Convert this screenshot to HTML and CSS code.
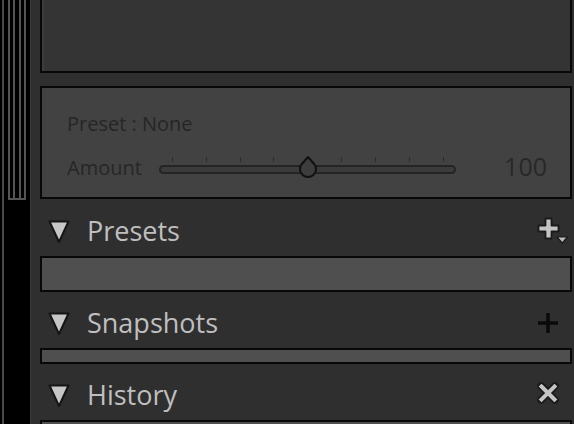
FILE: index.html
```html
<!DOCTYPE html>
<html>
<head>
<meta charset="utf-8">
<link rel="stylesheet" href="styles.css">
</head>
<body>
<div class="app">
  <div class="rail">
    <div class="rail-line"></div>
    <div class="scroller">
      <div class="bar"></div><div class="bar"></div><div class="bar"></div><div class="bar"></div>
    </div>
  </div>
  <div class="panel">
    <div class="box top-box"></div>
    <div class="box preset-box">
      <div class="preset-name">Preset : None</div>
      <div class="amount-row">
        <span class="amount-label">Amount</span>
        <div class="slider">
          <div class="ticks">
            <i></i><i></i><i></i><i></i><i class="hidden"></i><i></i><i></i><i></i><i></i>
          </div>
          <div class="track"></div>
          <svg class="knob" width="24" height="24" viewBox="0 0 24 24"><path d="M12 2 L18.6 9.5 A8 8 0 1 1 5.4 9.5 Z" fill="#3d3d3d" stroke="#111" stroke-width="2" stroke-linejoin="round"/></svg>
        </div>
        <span class="amount-value">100</span>
      </div>
    </div>

    <div class="section-head first">
      <svg class="tri" width="24" height="24" viewBox="0 0 24 24"><path d="M2.5 2.5 L21.5 2.5 L12 23 Z" fill="#c6c6c6" stroke="#151515" stroke-width="2" stroke-linejoin="round"/></svg>
      <span class="section-title">Presets</span>
      <svg class="head-icon" width="34" height="30" viewBox="0 0 34 30"><path d="M7.5 1.5 H13.5 V8.5 H20.5 V14.5 H13.5 V21.5 H7.5 V14.5 H0.5 V8.5 H7.5 Z" transform="translate(1,1)" fill="#c4c4c4" stroke="#1a1a1a" stroke-width="1.8" stroke-linejoin="round"/><path d="M20 21 H30.5 L25.25 27 Z" fill="#bdbdbd" stroke="#1a1a1a" stroke-width="1.2" stroke-linejoin="round"/></svg>
    </div>
    <div class="box list-box presets-list"></div>

    <div class="section-head">
      <svg class="tri" width="24" height="24" viewBox="0 0 24 24"><path d="M2.5 2.5 L21.5 2.5 L12 23 Z" fill="#c6c6c6" stroke="#151515" stroke-width="2" stroke-linejoin="round"/></svg>
      <span class="section-title">Snapshots</span>
      <svg class="head-icon" width="34" height="30" viewBox="0 0 34 30"><path d="M11 5 V25 M1 15 H21" stroke="#0a0a0a" stroke-width="3.5" fill="none"/></svg>
    </div>
    <div class="box list-box snapshots-list"></div>

    <div class="section-head">
      <svg class="tri" width="24" height="24" viewBox="0 0 24 24"><path d="M2.5 2.5 L21.5 2.5 L12 23 Z" fill="#c6c6c6" stroke="#151515" stroke-width="2" stroke-linejoin="round"/></svg>
      <span class="section-title">History</span>
      <svg class="head-icon" width="34" height="30" viewBox="0 0 34 30"><path d="M4 6 L18 20 M18 6 L4 20" stroke="#1a1a1a" stroke-width="7.5" stroke-linecap="round" fill="none"/><path d="M4.5 6.5 L17.5 19.5 M17.5 6.5 L4.5 19.5" stroke="#c4c4c4" stroke-width="4" stroke-linecap="square" fill="none"/></svg>
    </div>
    <div class="box list-box history-list"></div>
  </div>
</div>
</body>
</html>
```

FILE: styles.css
```css
html, body {
  margin: 0;
  padding: 0;
  background: #2f2f2f;
  overflow: hidden;
}

.app {
  display: flex;
  width: 574px;
  height: 424px;
  overflow: hidden;
  font-family: "Open Sans", "Noto Sans", sans-serif;
}

.rail {
  width: 30px;
  flex: none;
  background: #000;
  display: flex;
  align-items: flex-start;
}

.rail-line {
  width: 2px;
  height: 424px;
  margin-left: 2px;
  background: #4a4a4a;
  flex: none;
}

.scroller {
  margin-left: 4px;
  width: 18px;
  height: 198px;
  border-bottom: 2px solid #555;
  display: flex;
  justify-content: space-between;
  box-sizing: content-box;
}

.bar {
  width: 2px;
  background: #555;
}

.panel {
  flex: 1;
  background: #2f2f2f;
  border-left: 1px solid #3a3a3a;
  padding: 0 2px 0 9px;
  display: flex;
  flex-direction: column;
}

.box {
  border: 2px solid #080808;
  flex: none;
}

.top-box {
  border-top: none;
  height: 71px;
  background: #343434;
  box-shadow: inset 2px 0 0 #3c3c3c;
}

.preset-box {
  margin-top: 13px;
  height: 109px;
  background: #424242;
  padding: 0 23px 0 25px;
  box-sizing: content-box;
  color: #262626;
}

.preset-name {
  font-size: 20px;
  line-height: 24px;
  padding-top: 24px;
}

.amount-row {
  display: flex;
  align-items: center;
  margin-top: 15px;
}

.amount-label {
  font-size: 20px;
  line-height: 24px;
  padding-top: 5px;
}

.amount-value {
  margin-left: auto;
  font-size: 25px;
  line-height: 28px;
  color: #282828;
}

.slider {
  position: relative;
  width: 297px;
  margin-left: 17px;
}

.ticks {
  display: flex;
  justify-content: space-between;
  padding: 0 12px 0 13px;
  height: 5px;
}

.ticks i {
  width: 1px;
  height: 5px;
  background: #2c2c2c;
}

.ticks i.hidden {
  visibility: hidden;
}

.track {
  margin-top: 3px;
  height: 5px;
  border: 2px solid #242424;
  border-radius: 6px;
  background: #3b3b3b;
}

.knob {
  position: absolute;
  left: calc(50% - 11px);
  top: -2px;
}

.section-head {
  height: 56px;
  box-sizing: border-box;
  padding-top: 6px;
  display: flex;
  align-items: center;
  flex: none;
}

.section-head.first {
  height: 57px;
}

.tri {
  margin-left: 7px;
}

.section-title {
  margin-left: 16px;
  font-size: 27px;
  color: #bfbfbf;
  line-height: 30px;
}

.head-icon {
  margin-left: auto;
  margin-right: 1px;
}

.list-box {
  background: #4f4f4f;
}

.presets-list {
  height: 32px;
}

.snapshots-list {
  height: 12px;
}

.history-list {
  height: 30px;
}
```
